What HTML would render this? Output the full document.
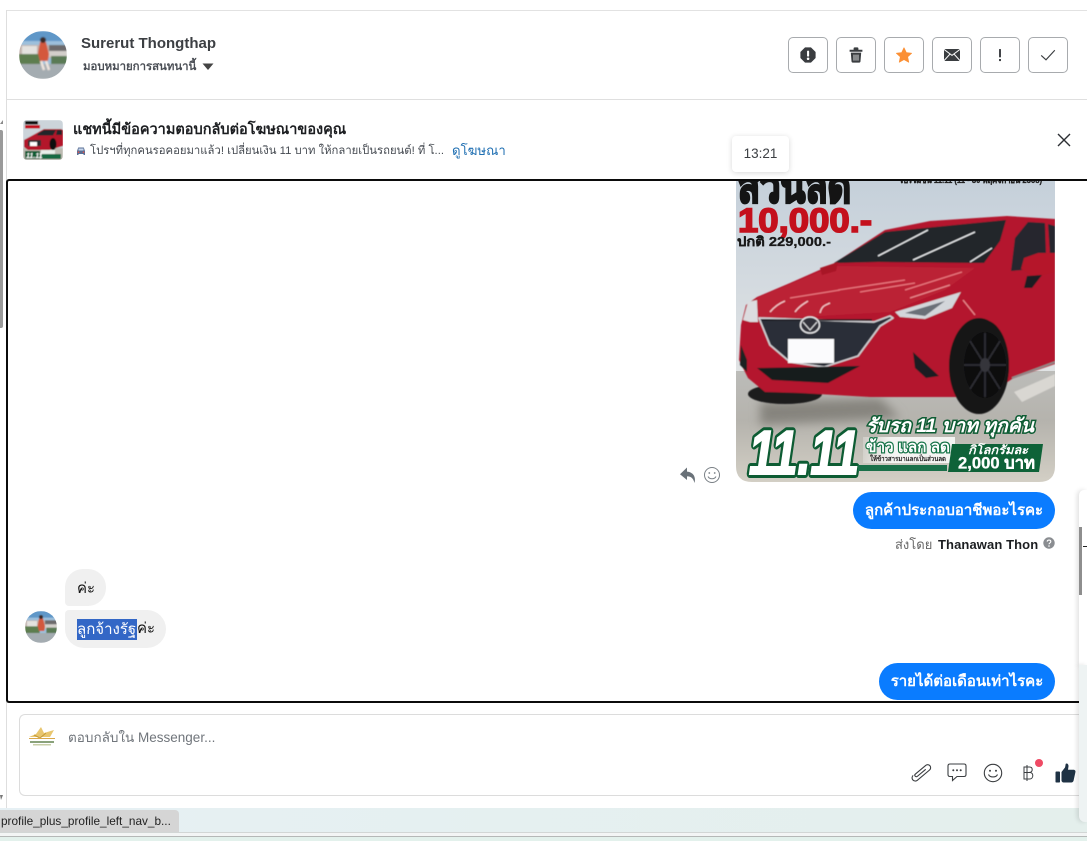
<!DOCTYPE html>
<html lang="th"><head><meta charset="utf-8"><title>Inbox</title>
<style>
*{box-sizing:border-box}
html,body{margin:0;padding:0;width:1087px;height:841px;overflow:hidden;background:#fff;font-family:"Liberation Sans","Noto Sans CJK SC",sans-serif;color:#1c1e21}
.a{position:absolute}
.t{position:absolute;white-space:nowrap}
.btn{position:absolute;top:37px;width:40px;height:36px;border:1px solid #a8abae;border-radius:5px;background:#fff}
.btn svg{position:absolute;left:11px;top:9px;width:16px;height:16px}
.blue{position:absolute;background:#0a7cff;color:#fff;border-radius:19px;font-size:15px;font-weight:bold;white-space:nowrap;text-align:center}
.gray{position:absolute;background:#f0f0f0;border-radius:18px;font-size:15px;white-space:nowrap;color:#111}
svg text{font-family:"Liberation Sans","Noto Sans CJK SC",sans-serif}
</style></head><body>

<div class="a" style="left:7px;top:10px;width:1080px;height:1px;background:#e2e2e2"></div>
<div class="a" style="left:6px;top:10px;width:1px;height:798px;background:#dedede"></div>
<div class="a" style="left:7px;top:99px;width:1080px;height:1px;background:#dfdfdf"></div>

<div class="a" style="left:0;top:130px;width:3px;height:198px;background:#9a9a9a;border-radius:0 2px 2px 0"></div>
<svg class="a" style="left:0;top:116px" width="4" height="10"><path d="M0 8L3 4V8Z" fill="#8a8a8a"/></svg>
<svg class="a" style="left:0;top:794px" width="4" height="8"><path d="M0 1H3L1 6Z" fill="#777"/></svg>

<svg class="a" style="left:19px;top:31px" width="48" height="48" viewBox="0 0 48 48">
<defs><clipPath id="c1"><circle cx="24" cy="24" r="24"/></clipPath><filter id="b1"><feGaussianBlur stdDeviation=".7"/></filter></defs>
<g clip-path="url(#c1)"><g filter="url(#b1)">
<rect width="48" height="48" fill="#9cc0dc"/><rect y="0" width="48" height="10" fill="#5f97c8"/>
<rect y="14" width="48" height="13" fill="#c2b4ae"/><rect x="3" y="15" width="15" height="9" fill="#e4e2df"/><rect x="30" y="14" width="18" height="6" fill="#6d6a6c"/><rect x="30" y="20" width="18" height="6" fill="#d3cfcb"/>
<rect y="23" width="22" height="11" fill="#5d7d50"/><rect x="32" y="25" width="16" height="9" fill="#5a7a55"/><rect y="33" width="48" height="15" fill="#a4acb1"/>
<path d="M21 11h6l3 12-1 7h-8l-2-8z" fill="#d4583c"/><circle cx="24" cy="9" r="3" fill="#3a2a28"/>
<path d="M22 30l3 9M27 30l3 9" stroke="#efe5de" stroke-width="2.500"/>
</g></g></svg>
<div class="t" style="left:81px;top:34px;font-size:15px;font-weight:bold;color:#3c3f43;line-height:19px">Surerut Thongthap</div>
<div class="t" style="left:83px;top:59px;font-size:11.4px;font-weight:bold;color:#4b4f56;line-height:16px">มอบหมายการสนทนานี้</div>
<svg class="a" style="left:202px;top:63px" width="12" height="8"><path d="M0.500 0.500H11.500L6 7Z" fill="#444"/></svg>

<div class="btn" style="left:788px"><svg viewBox="0 0 20 20"><path d="M6.500 1H13.500L19 6.500V13.500L13.500 19H6.500L1 13.500V6.500Z" fill="#3a3d40" stroke="#3a3d40" stroke-linejoin="round"/><rect x="8.800" y="4.500" width="2.600" height="7.500" rx="1" fill="#fff"/><circle cx="10.100" cy="14.700" r="1.600" fill="#fff"/></svg></div>
<div class="btn" style="left:836px"><svg viewBox="0 0 20 20"><path d="M2 3.500H18V6H2ZM7 3.500V2C7 1 7.500 .5 8.500 .5H11.500C12.500 .5 13 1 13 2V3.500" fill="#3a3d40"/><path d="M3.500 7H16.500L15.600 18C15.500 19 15 19.500 14 19.500H6C5 19.500 4.500 19 4.400 18Z" fill="#3a3d40"/><path d="M7.500 9.500V17M10 9.500V17M12.500 9.500V17" stroke="#fff" stroke-width="1"/></svg></div>
<div class="btn" style="left:884px"><svg viewBox="0 0 20 20"><path d="M10 1L12.800 7L19.500 7.800L14.500 12.300L15.900 19L10 15.600L4.100 19L5.500 12.300L.5 7.800L7.200 7Z" fill="#fb8f34" stroke="#fb8f34" stroke-linejoin="round"/></svg></div>
<div class="btn" style="left:932px"><svg viewBox="0 0 20 20"><rect x="0" y="2.500" width="20" height="15" rx="1.200" fill="#3a3d40"/><path d="M0 3L10 10.500L20 3M0 17L7.500 8.800M20 17L12.500 8.800" stroke="#fff" stroke-width="1.300" fill="none"/></svg></div>
<div class="btn" style="left:980px"><svg viewBox="0 0 20 20"><rect x="8.800" y="2.500" width="2.400" height="10.500" rx=".7" fill="#3a3d40"/><rect x="8.800" y="15" width="2.400" height="2.600" fill="#3a3d40"/></svg></div>
<div class="btn" style="left:1028px"><svg viewBox="0 0 20 20"><path d="M1.500 10.500L7.500 16L18.500 4" stroke="#3a3d40" stroke-width="1.400" fill="none"/></svg></div>

<svg class="a" style="left:23px;top:120px;border-radius:4px" width="40" height="40" viewBox="0 0 40 40">
<defs><filter id="b3"><feGaussianBlur stdDeviation=".45"/></filter></defs>
<g filter="url(#b3)">
<rect width="40" height="40" fill="#ccd4da"/><rect y="28" width="40" height="12" fill="#bdbbb2"/>
<rect x="2" y="1" width="13" height="3.500" fill="#111"/><rect x="2" y="5" width="15" height="3.500" fill="#c3101e"/>
<path d="M1 20L12 14L21 9H38L40 10V26L26 30H5L1 27Z" fill="#b3182b"/><path d="M15 13.500L21 10H33L30 15.500H14Z" fill="#23262a"/><path d="M34 10L39 10V15H33Z" fill="#23262a"/>
<rect x="5" y="20" width="13" height="6" fill="#2b2d33"/><rect x="7" y="22" width="7" height="4" fill="#fff"/><ellipse cx="30" cy="24" rx="3.500" ry="6" fill="#111"/>
<rect x="2" y="31" width="15" height="8" fill="#0d5c33"/><rect x="18" y="34" width="20" height="5" fill="#196a42"/><rect x="18" y="30" width="14" height="4" fill="#e8efe9"/>
<text x="3" y="38" font-size="7" font-weight="bold" font-style="italic" fill="#fff">11.11</text>
</g></svg>
<div class="t" style="left:73px;top:121px;font-size:14.5px;font-weight:bold;line-height:18px;color:#1c1e21">แชทนี้มีข้อความตอบกลับต่อโฆษณาของคุณ</div>
<svg class="a" style="left:76px;top:146px" width="10" height="10" viewBox="0 0 10 10"><path d="M1 5L2.200 1.500H7.800L9 5V9H7.500V8H2.500V9H1Z" fill="#5a6f94"/><rect x="2.500" y="2.500" width="5" height="2" fill="#c7d6ec"/><circle cx="2.500" cy="6.200" r=".8" fill="#e5554c"/><circle cx="7.500" cy="6.200" r=".8" fill="#e5554c"/></svg>
<div class="t" style="left:90px;top:143px;font-size:11.3px;line-height:16px;color:#444950">โปรฯที่ทุกคนรอคอยมาแล้ว! เปลี่ยนเงิน 11 บาท ให้กลายเป็นรถยนต์! ที่ โ...</div>
<div class="t" style="left:452px;top:143px;font-size:13.2px;line-height:16px;color:#1f6fb2">ดูโฆษณา</div>
<svg class="a" style="left:1057px;top:133px" width="14" height="14"><path d="M1 1L13 13M13 1L1 13" stroke="#2c2f33" stroke-width="1.400"/></svg>

<!-- chat frame -->
<div class="a" style="left:6px;top:179px;width:1081px;height:524px;border:2px solid #0b0b0b;border-right:0;border-radius:3px 0 0 3px;background:#fff"></div>

<!-- ad image -->
<svg class="a" style="left:736px;top:181px" width="319" height="301" viewBox="736 181 319 301">
<defs>
<linearGradient id="bg" x1="0" y1="0" x2="0" y2="1"><stop offset="0" stop-color="#c5d0da"/><stop offset="1" stop-color="#e2e4e5"/></linearGradient>
<linearGradient id="fl" x1="0" y1="0" x2="0" y2="1"><stop offset="0" stop-color="#bcbcb9"/><stop offset=".45" stop-color="#b5b3ad"/><stop offset="1" stop-color="#d3cfc5"/></linearGradient>
<linearGradient id="wb" x1="0" y1="0" x2="1" y2="0"><stop offset="0" stop-color="#f4f4f2" stop-opacity=".3"/><stop offset=".3" stop-color="#f4f4f2"/></linearGradient>
<clipPath id="im"><path d="M736 181H1055V466Q1055 482 1039 482H752Q736 482 736 466Z"/></clipPath>
<filter id="bl" x="-5%" y="-5%" width="110%" height="110%"><feGaussianBlur stdDeviation=".55"/></filter>
<filter id="bl2" x="-20%" y="-40%" width="140%" height="180%"><feGaussianBlur stdDeviation="5"/></filter>
</defs>
<g clip-path="url(#im)">
<rect x="736" y="181" width="319" height="200" fill="url(#bg)"/>
<rect x="736" y="371" width="319" height="111" fill="url(#fl)"/>
<path d="M760 402L880 398L900 418L760 425Z" fill="#86847e" filter="url(#bl2)"/>
<g filter="url(#bl)">
<path d="M1014 392L1055 374V386L1022 402Z" fill="#d9d7d2"/>
<ellipse cx="785" cy="394" rx="37" ry="10" fill="#1c1c1e"/>
<!-- body -->
<path d="M741 325L746 305L757 297L790 283L833 264L885 230L930 221L1007 216L1055 219V364L1012 379L985 397H870L800 393L765 392L748 378L739 360Z" fill="#b4192d"/>
<path d="M757 298L833 266L975 268L945 290L890 312L800 317L760 318Z" fill="#bb2034"/>
<!-- windows -->
<path d="M834 263L885 232L1006 220L1000 241L984 263L878 262Z" fill="#23262b"/>
<path d="M878 256L928 230M913 260L975 232M970 262L992 248" stroke="#eef0f2" stroke-width="1.300"/>
<path d="M1011 271L1015 238L1028 222L1045 223L1046 255L1040 262L1022 270Z" fill="#26282d"/><path d="M1048 224L1055 226V255L1050 255Z" fill="#26282d"/>
<path d="M1021 269L1024 258L1038 253H1055V272L1035 277Z" fill="#b5162a"/><path d="M1027 276L1042 275L1032 288H1024Z" fill="#1d1e22"/>
<path d="M820 268L838 262L836 271L822 275Z" fill="#a81527"/>
<!-- hood highlights -->
<path d="M790 298L840 290M838 290L905 280M860 292L915 283M905 290L962 272" stroke="#e8777f" stroke-width="1.300" fill="none"/>
<path d="M770 312C775 306 780 303 785 301M795 312C800 305 804 304 808 301M820 313C822 305 826 305 830 303" stroke="#f3c5c8" stroke-width="1.400" fill="none"/>
<path d="M910 298L950 285M963 300L975 315" stroke="#e9888e" stroke-width="1.300" fill="none"/>
<!-- grille chrome -->
<path d="M759 318L874 322L890 316L893 318L880 326L858 356L824 367L790 362L770 345Z" fill="#2b2f38" stroke="#cfcfd3" stroke-width="1.700" stroke-linejoin="round"/>
<path d="M762 320H872" stroke="#15171b" stroke-width="1.500"/>
<!-- headlights -->
<path d="M895 312L961 292L952 308L925 319L900 317Z" fill="#d3d6da"/><path d="M905 313L945 301L925 316Z" fill="#6a7078"/>
<path d="M743 320L748 302L757 300L758 322L750 322Z" fill="#dcdcdf"/>
<!-- plate & logo -->
<rect x="788" y="339" width="46" height="24" fill="#fbfbfd"/>
<ellipse cx="810" cy="325" rx="9.500" ry="8" fill="#30333a" stroke="#e6e6e8" stroke-width="1.500"/><path d="M803 322L810 330L817 322" stroke="#e6e6e8" fill="none"/>
<!-- lower -->
<path d="M757 368L860 366L828 383L772 380Z" fill="#191a1f"/>
<path d="M741 345L747 360V372L740 365Z" fill="#1f2024"/>
<path d="M913 352L939 376L926 378L915 368Z" fill="#1d1e22"/>
<path d="M1012 378L1055 362" stroke="#8f8a8b" stroke-width="2"/>
<!-- wheel -->
<ellipse cx="979" cy="366" rx="30" ry="48" fill="#121214"/>
<ellipse cx="984" cy="365" rx="25" ry="45" fill="#141416"/>
<ellipse cx="985" cy="365" rx="21" ry="33" fill="#0e0e10"/>
<g stroke="#2c2c31" stroke-width="2"><path d="M985 333V397M964 365H1006M970 341L1000 389M1000 341L970 389"/></g>
<ellipse cx="985" cy="365" rx="5" ry="7" fill="#34343a"/>
</g>
<!-- text -->
<text x="738" y="202" font-size="44" font-weight="bold" fill="#141414" stroke="#141414" stroke-width="2.400" textLength="113" lengthAdjust="spacingAndGlyphs">ส่วนลด</text>
<text x="738" y="232" font-size="34" font-weight="bold" fill="#c4101c" stroke="#c4101c" stroke-width="1.600" textLength="134" lengthAdjust="spacingAndGlyphs">10,000.-</text>
<text x="737" y="246" font-size="13" font-weight="bold" fill="#181818" stroke="#181818" stroke-width=".3" textLength="94" lengthAdjust="spacingAndGlyphs">ปกติ 229,000.-</text>
<text x="893" y="183" font-size="9" font-weight="bold" fill="#222" stroke="#222" stroke-width=".3" textLength="155" lengthAdjust="spacingAndGlyphs">**โปรโมชั่น 11.11 (11 - 30 พฤศจิกายน 2568)**</text>
<!-- promo -->
<rect x="863" y="437" width="92" height="26" fill="url(#wb)"/>
<text x="749" y="474" font-size="62" font-weight="bold" font-style="italic" fill="#0d5c33" stroke="#0d5c33" stroke-width="8" stroke-linejoin="round" textLength="110" lengthAdjust="spacingAndGlyphs">11.11</text>
<text x="749" y="474" font-size="62" font-weight="bold" font-style="italic" fill="#fff" stroke="#fff" stroke-width="2" textLength="110" lengthAdjust="spacingAndGlyphs">11.11</text>
<text x="866" y="432" font-size="19" font-weight="bold" font-style="italic" fill="#fff" stroke="#0d5c33" stroke-width="3" paint-order="stroke" textLength="168" lengthAdjust="spacingAndGlyphs">รับรถ 11 บาท ทุกคัน</text>
<text x="866" y="452" font-size="16" font-weight="bold" fill="#fff" stroke="#157347" stroke-width="2.400" paint-order="stroke" textLength="84" lengthAdjust="spacingAndGlyphs">ข้าว แลก ลด</text>
<text x="870" y="461" font-size="7" font-weight="bold" fill="#222" textLength="76" lengthAdjust="spacingAndGlyphs">ให้ข้าวสารมาแลกเป็นส่วนลด</text>
<rect x="858" y="465" width="89" height="6" fill="#1a7049"/>
<path d="M952 444H1043L1039 472H948Z" fill="#0e6238"/>
<text x="968" y="454" font-size="12" font-weight="bold" font-style="italic" fill="#fff" textLength="60" lengthAdjust="spacingAndGlyphs">กิโลกรัมละ</text>
<text x="958" y="468.500" font-size="17" font-weight="bold" fill="#fff" stroke="#fff" stroke-width=".3" textLength="77" lengthAdjust="spacingAndGlyphs">2,000 บาท</text>
</g>
</svg>

<!-- time tooltip -->
<div class="t" style="left:732px;top:136px;width:57px;height:36px;background:#fff;border-radius:4px;box-shadow:0 1px 6px rgba(0,0,0,.16);font-size:13.5px;line-height:36px;text-align:center;color:#3c3f43">13:21</div>

<!-- reaction icons -->
<svg class="a" style="left:679px;top:466px" width="18" height="18" viewBox="0 0 18 18"><path d="M8 1.500L1 8.200L8 14V10.400C11.500 10.400 14 11.500 15.500 17C17 11 14.500 6.200 8 5.600Z" fill="#6a7279"/></svg>
<svg class="a" style="left:703px;top:466px" width="18" height="18" viewBox="0 0 18 18"><circle cx="9" cy="9" r="7.500" fill="none" stroke="#7a8086" stroke-width="1"/><circle cx="6.300" cy="7" r=".9" fill="#7a8086"/><circle cx="11.700" cy="7" r=".9" fill="#7a8086"/><path d="M5 10.500C6.500 13.500 11.500 13.500 13 10.500" fill="none" stroke="#7a8086"/></svg>

<!-- messages -->
<div class="blue" style="left:853px;top:492px;width:202px;height:37px;line-height:37px">ลูกค้าประกอบอาชีพอะไรคะ</div>
<div class="t" style="left:895px;top:536px;font-size:13px;line-height:18px;color:#666"><span style="display:inline-block;width:43px">ส่งโดย</span><span style="color:#1c1e21;font-weight:bold;font-size:13px;letter-spacing:.1px">Thanawan Thon</span></div>
<svg class="a" style="left:1043px;top:537px" width="12" height="12" viewBox="0 0 12 12"><circle cx="6" cy="6" r="5.700" fill="#8a8d91"/><path d="M4.200 4.600C4.300 2.600 7.800 2.600 7.800 4.600C7.800 6 6 5.800 6 7.300" fill="none" stroke="#fff" stroke-width="1.100"/><circle cx="6" cy="9" r=".8" fill="#fff"/></svg>

<div class="gray" style="left:65px;top:569px;width:41px;height:37px;line-height:40px;padding-left:12px;border-radius:18px 18px 18px 4px">ค่ะ</div>
<svg class="a" style="left:25px;top:611px" width="32" height="32" viewBox="0 0 48 48">
<defs><clipPath id="c2"><circle cx="24" cy="24" r="24"/></clipPath></defs>
<g clip-path="url(#c2)"><g filter="url(#b1)">
<rect width="48" height="48" fill="#9cc0dc"/><rect y="0" width="48" height="10" fill="#5f97c8"/>
<rect y="14" width="48" height="13" fill="#c2b4ae"/><rect x="3" y="15" width="15" height="9" fill="#e4e2df"/><rect x="30" y="14" width="18" height="6" fill="#6d6a6c"/><rect x="30" y="20" width="18" height="6" fill="#d3cfcb"/>
<rect y="23" width="22" height="11" fill="#5d7d50"/><rect x="32" y="25" width="16" height="9" fill="#5a7a55"/><rect y="33" width="48" height="15" fill="#a4acb1"/>
<path d="M21 11h6l3 12-1 7h-8l-2-8z" fill="#d4583c"/><circle cx="24" cy="9" r="3" fill="#3a2a28"/>
</g></g></svg>
<div class="gray" style="left:65px;top:610px;width:101px;height:38px;line-height:38px;padding-left:12px;border-radius:4px 19px 19px 19px"><span style="background:#3367c6;color:#fff;display:inline-block;width:60px;height:21px;line-height:21px;vertical-align:middle">ลูกจ้างรัฐ</span><span style="vertical-align:middle">ค่ะ</span></div>
<div class="blue" style="left:879px;top:663px;width:176px;height:37px;line-height:37px">รายได้ต่อเดือนเท่าไรคะ</div>

<!-- composer -->
<div class="a" style="left:19px;top:714px;width:1068px;height:82px;border:1px solid #dcdcdc;border-right:0;border-radius:6px 0 0 6px;background:#fff"></div>
<svg class="a" style="left:28px;top:725px" width="28" height="22" viewBox="0 0 28 22"><path d="M1 12L8 9L13 2L16 8L26 5L22 12Z" fill="#e8c66f"/><path d="M6 10L12 13L18 8" stroke="#c59a37" fill="none"/><rect x="1" y="13" width="26" height="1" fill="#d9a84a"/><rect x="2" y="16" width="24" height="2" fill="#8aa27b"/><rect x="5" y="19" width="18" height="1.500" fill="#c8cfa8"/></svg>
<div class="t" style="left:68px;top:729px;font-size:13.5px;line-height:17px;color:#70757b">ตอบกลับใน Messenger...</div>

<svg class="a" style="left:911px;top:763px;overflow:visible" width="20" height="20" viewBox="0 0 20 20"><path transform="rotate(50 10 10)" d="M10.200 4V15a1.500 1.500 0 0 1-3 0V1.500a3 3 0 0 1 6 0V17.500a3.200 3.200 0 0 1-6.400 0" fill="none" stroke="#3a3d40" stroke-width="1.100"/></svg>
<svg class="a" style="left:947px;top:763px" width="20" height="19" viewBox="0 0 20 19"><path d="M3 1H17C18.200 1 19 1.800 19 3V11.500C19 12.700 18.200 13.500 17 13.500H10L5.500 17.500V13.500H3C1.800 13.500 1 12.700 1 11.500V3C1 1.800 1.800 1 3 1Z" fill="none" stroke="#3a3d40" stroke-width="1.100"/><circle cx="6.300" cy="7.200" r="1" fill="#3a3d40"/><circle cx="10" cy="7.200" r="1" fill="#3a3d40"/><circle cx="13.700" cy="7.200" r="1" fill="#3a3d40"/></svg>
<svg class="a" style="left:983px;top:763px" width="20" height="20" viewBox="0 0 20 20"><circle cx="10" cy="10" r="8.700" fill="none" stroke="#3a3d40" stroke-width="1.100"/><circle cx="7" cy="7.800" r="1" fill="#3a3d40"/><circle cx="13" cy="7.800" r="1" fill="#3a3d40"/><path d="M5.500 11.500C7 14.800 13 14.800 14.500 11.500" fill="none" stroke="#3a3d40" stroke-width="1.100"/></svg>
<svg class="a" style="left:1022px;top:764px" width="12" height="18" viewBox="0 0 12 18"><path d="M2 3H7.500C9.500 3 10.200 4.300 10.200 5.600C10.200 7 9.300 8.200 7.500 8.400C9.700 8.600 10.800 9.800 10.800 11.600C10.800 13.500 9.500 15 7.500 15H2ZM2 8.500H7.500M5 1V17" fill="none" stroke="#3a3d40" stroke-width="1"/></svg>
<div class="a" style="left:1035px;top:759px;width:8px;height:8px;border-radius:50%;background:#ef4a64"></div>
<svg class="a" style="left:1055px;top:763px" width="21" height="20" viewBox="0 0 21 20"><rect x="0.500" y="8.500" width="4.500" height="11" rx=".8" fill="#1f3244"/><path d="M6.500 9L10 4.500C10.500 3.200 10.400 1.500 10.800 0.800C11.800 0 13.600 1 13.500 3.200L13 6.800H18.500C20 6.800 20.800 8 20.400 9.200L18.600 17.500C18.300 18.800 17.400 19.500 16.200 19.500H9C7.600 19.500 6.500 18.600 6.500 17.200Z" fill="#1f3244"/></svg>

<!-- bottom status bar -->
<div class="a" style="left:0;top:808px;width:1087px;height:24px;background:linear-gradient(90deg,#e6f0f4,#e4efec)"></div>
<div class="a" style="left:0;top:832px;width:1087px;height:1px;background:#d2d6d5"></div>
<div class="a" style="left:0;top:833px;width:1087px;height:3px;background:#f3f5f5"></div>
<div class="a" style="left:0;top:836px;width:1087px;height:1px;background:#b5b8b7"></div>
<div class="a" style="left:0;top:837px;width:1087px;height:4px;background:#e3f1ec"></div>
<div class="t" style="left:0;top:810px;width:179px;height:22px;background:#d5d5d5;border-radius:0 4px 0 0;font-size:11.8px;line-height:23px;padding-left:1px;color:#222;overflow:hidden">profile_plus_profile_left_nav_b...</div>

<!-- right overlay panel -->
<div class="a" style="left:1079px;top:490px;width:8px;height:176px;background:#fff;border-radius:5px 0 0 0;box-shadow:-2px 0 5px rgba(0,0,0,.12)"></div>
<div class="a" style="left:1079px;top:527px;width:3px;height:68px;background:#8e8e8e"></div>
<div class="a" style="left:1083px;top:546px;width:4px;height:1px;background:#222"></div>
<div class="a" style="left:1079px;top:665px;width:8px;height:157px;background:#eef3f3;border-radius:0 0 0 6px;box-shadow:-2px 0 5px rgba(0,0,0,.12)"></div>
</body></html>
